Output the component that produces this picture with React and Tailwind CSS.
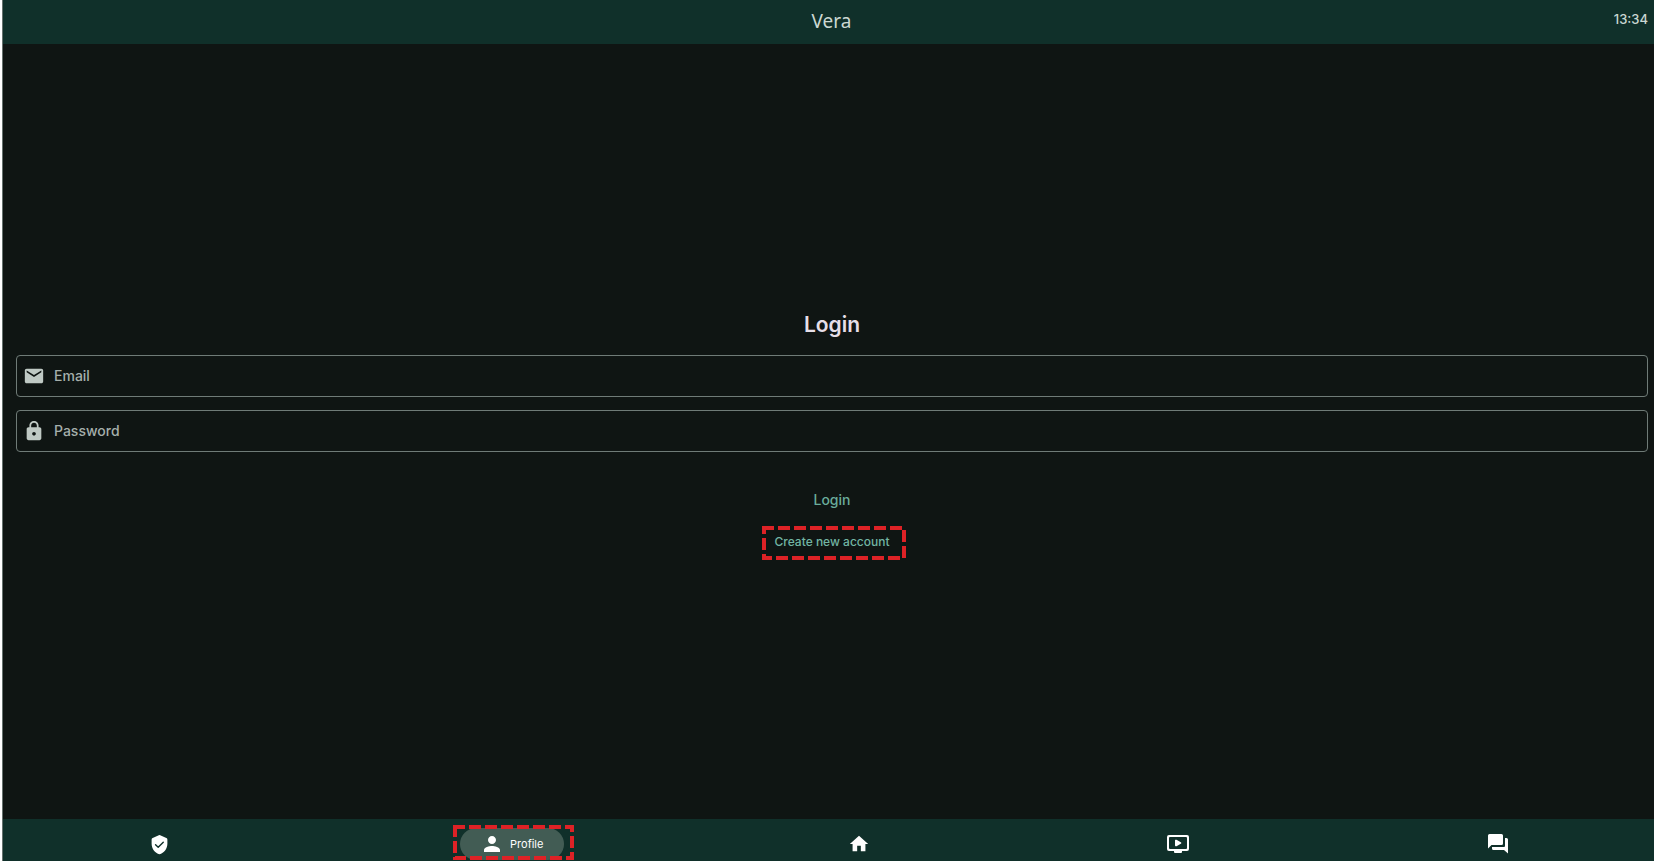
import { MdEmail, MdLock, MdPerson, MdHome } from "react-icons/md";

function DashedFrame({ className }) {
  return (
    <svg className={`pointer-events-none absolute ${className}`} aria-hidden="true">
      <rect
        x="2"
        y="2"
        className="h-[calc(100%-4px)] w-[calc(100%-4px)]"
        fill="none"
        stroke="#de2226"
        strokeWidth="4"
        strokeDasharray="12 4"
        strokeDashoffset="2"
      />
    </svg>
  );
}

function Field({ id, label, type, icon: Icon }) {
  return (
    <div className="flex h-[42px] items-center gap-[9px] rounded border border-[#6f7b77] pl-1.5">
      <label htmlFor={id} aria-label={label} className="text-[#bfc9c4]">
        <Icon size={22} />
      </label>
      <input
        id={id}
        type={type}
        placeholder={label}
        className="h-full min-w-0 flex-1 bg-transparent pb-0.5 text-sm font-medium text-[#bfc9c4] outline-none placeholder:text-[#a5afab]"
      />
    </div>
  );
}

function ShieldIcon() {
  return (
    <svg width="21" height="21" viewBox="0 0 24 24" fill="currentColor" aria-hidden="true">
      <path d="M11.2 1.4 4.2 4.500A2 2 0 0 0 3 6.300V11c0 5.550 3.840 10.700 9 12 5.160-1.300 9-6.450 9-12V6.300A2 2 0 0 0 19.800 4.500l-7-3.100a2 2 0 0 0-1.600 0Z" />
      <path d="m7.500 12.400 3 2.800 5.800-5.700" fill="none" stroke="#10302a" strokeWidth="1.600" strokeLinecap="round" strokeLinejoin="round" />
    </svg>
  );
}

function VideoIcon() {
  return (
    <svg width="24" height="24" viewBox="0 0 24 24" fill="currentColor" aria-hidden="true">
      <path d="M21 3H3a2 2 0 0 0-2 2v12a2 2 0 0 0 2 2h5v1a1 1 0 0 0 1 1h6a1 1 0 0 0 1-1v-1h5a2 2 0 0 0 2-2V5a2 2 0 0 0-2-2Zm-1 14H4a1 1 0 0 1-1-1V6a1 1 0 0 1 1-1h16a1 1 0 0 1 1 1v10a1 1 0 0 1-1 1Z" />
      <path d="M9 8.700v4.600a1 1 0 0 0 1.500.870l4.300-2.300a1 1 0 0 0 0-1.740l-4.300-2.300A1 1 0 0 0 9 8.700Z" />
    </svg>
  );
}

function ChatIcon() {
  return (
    <svg width="24" height="24" viewBox="0 0 24 24" fill="currentColor" aria-hidden="true">
      <path d="M20.500 6H19v8a1 1 0 0 1-1 1H6v1.500a1.500 1.500 0 0 0 1.500 1.500H18l4 3.500V7.500A1.500 1.500 0 0 0 20.500 6ZM17 11.500v-8A1.500 1.500 0 0 0 15.500 2h-12A1.500 1.500 0 0 0 2 3.500V16.500L5.500 13h10a1.500 1.500 0 0 0 1.500-1.500Z" />
    </svg>
  );
}

function NavButton({ label, children }) {
  return (
    <button type="button" aria-label={label} className="flex h-8 w-11 items-center justify-center">
      {children}
    </button>
  );
}

export default function App() {
  return (
    <div className="flex min-h-screen flex-col border-l-2 border-white bg-[#0f1513] font-['Inter',sans-serif]">
      <div className="flex flex-1 flex-col border-l border-[#65716d]">
        <header className="grid h-11 grid-cols-[1fr_auto_1fr] items-center bg-[#10302a] pr-1.5 pl-3 text-[#cbd8d2]">
          <h1 className="col-start-2 pb-0.5 font-['Noto_Sans',sans-serif] text-[19px] leading-6">Vera</h1>
          <time className="justify-self-end pb-1 text-[13px] font-medium">13:34</time>
        </header>

        <main className="flex flex-1 flex-col items-center justify-center">
          <form className="flex w-full flex-col items-center pr-1.5 pl-[13px]">
            <h2 className="pt-0.5 text-[21px] leading-7 font-semibold text-[#e6dfe8]">Login</h2>
            <div className="mt-4 flex w-full flex-col gap-[13px]">
              <Field id="email" label="Email" type="email" icon={MdEmail} />
              <Field id="password" label="Password" type="password" icon={MdLock} />
            </div>
            <button type="button" className="mt-8 px-3 py-1 text-sm leading-6 font-medium text-[#6aac9b]">
              Login
            </button>
            <div className="relative mt-3.5 flex h-6 items-center">
              <a href="#create" className="px-3 text-xs font-medium text-[#72b5a3]">
                Create new account
              </a>
              <DashedFrame className="-top-1 left-0 h-[34px] w-36" />
            </div>
          </form>
        </main>

        <nav className="flex h-[42px] items-end justify-between bg-[#10302a] px-[134px] pb-px text-white">
          <NavButton label="Security">
            <ShieldIcon />
          </NavButton>
          <div className="relative -mr-[3px] pl-[3px]">
            <button
              type="button"
              className="flex h-8 w-[104px] items-center justify-center gap-1.5 rounded-full bg-[#425c54] text-[11px]"
            >
              <MdPerson size={24} />
              Profile
            </button>
            <DashedFrame className="-top-[3px] -left-1 h-[35px] w-[121px]" />
          </div>
          <NavButton label="Home">
            <MdHome size={22} />
          </NavButton>
          <NavButton label="Videos">
            <VideoIcon />
          </NavButton>
          <NavButton label="Messages">
            <ChatIcon />
          </NavButton>
        </nav>
      </div>
    </div>
  );
}
